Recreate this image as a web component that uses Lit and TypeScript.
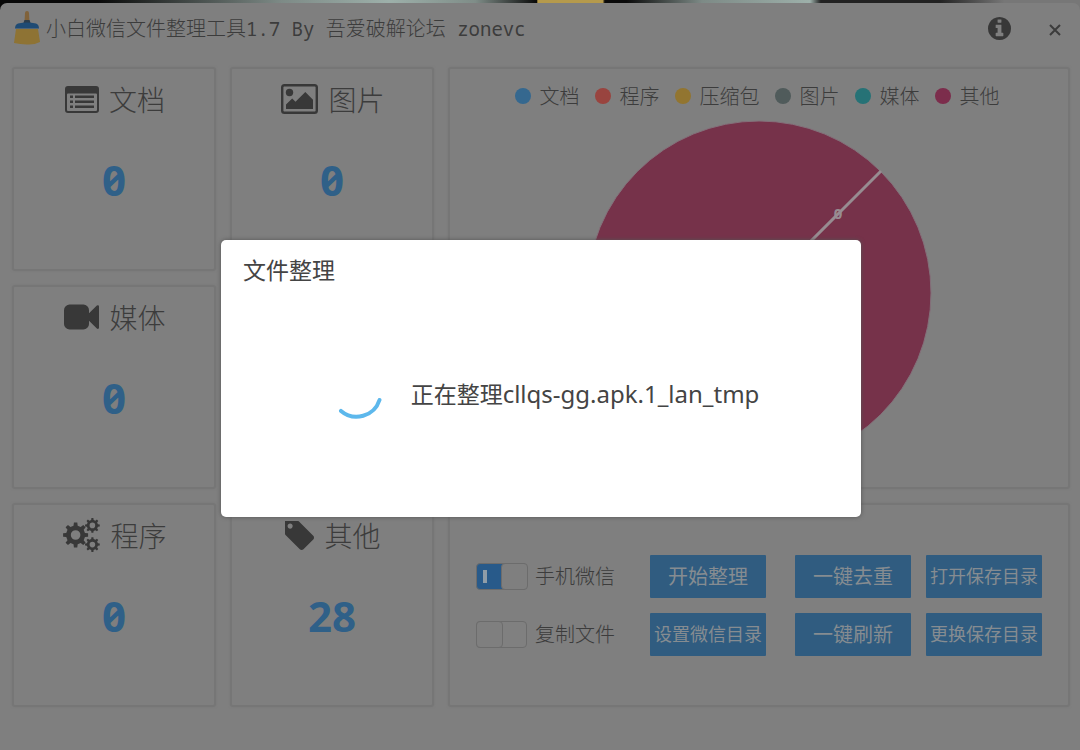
import { LitElement, html, css, svg } from "lit";
import { customElement, state } from "lit/decorators.js";

/** Outline of a cog wheel with a round hole, centred on (cx, cy). */
function cog(cx: number, cy: number, r: number, hole: number, teeth = 8): string {
  const inner = r * 0.76;
  const step = (Math.PI * 2) / teeth;
  const pts: string[] = [];
  for (let i = 0; i < teeth; i++) {
    const a = i * step;
    for (const [off, rad] of [[-0.28, inner], [-0.17, r], [0.17, r], [0.28, inner]]) {
      const t = a + off * step;
      pts.push(`${(cx + Math.cos(t) * rad).toFixed(2)} ${(cy + Math.sin(t) * rad).toFixed(2)}`);
    }
  }
  return `M${pts.join("L")}Z M${cx - hole} ${cy}a${hole} ${hole} 0 1 0 ${hole * 2} 0a${hole} ${hole} 0 1 0 ${-hole * 2} 0Z`;
}

const icons = {
  doc: html`<svg width="34" height="27" viewBox="0 0 34 27" aria-hidden="true">
    <path fill-rule="evenodd" d="M3 0H31a3 3 0 0 1 3 3V24a3 3 0 0 1-3 3H3a3 3 0 0 1-3-3V3a3 3 0 0 1 3-3ZM3 7.500a1 1 0 0 0-1 1V24a1 1 0 0 0 1 1H31a1 1 0 0 0 1-1V8.500a1 1 0 0 0-1-1Z"/>
    <path d="M5 9.500h3v2.400H5zM10 9.500h19v2.400H10zM5 14.500h3v2.400H5zM10 14.500h19v2.400H10zM5 19.500h3v2.400H5zM10 19.500h19v2.400H10z"/>
  </svg>`,
  image: html`<svg width="37" height="30" viewBox="0 0 37 30" aria-hidden="true">
    <path fill-rule="evenodd" d="M3.500 0H33.500a3.500 3.500 0 0 1 3.500 3.500V26.500a3.500 3.500 0 0 1-3.500 3.500H3.500a3.500 3.500 0 0 1-3.500-3.500V3.500A3.500 3.500 0 0 1 3.500 0ZM3.200 2.400a.8.8 0 0 0-.8.8V26.800a.8.8 0 0 0 .8.8H33.800a.8.8 0 0 0 .8-.8V3.200a.8.8 0 0 0-.8-.8Z"/>
    <circle cx="8.500" cy="8.500" r="3.700"/>
    <path d="M5 25V20.500L11.200 14.500L14.500 17.800L24.300 8L32 15.700V25Z"/>
  </svg>`,
  video: html`<svg width="35" height="26" viewBox="0 256 1792 1280" aria-hidden="true">
    <path d="M1792 352v1088q0 42-39 59-13 5-25 5-27 0-45-19l-403-403v166q0 119-84.500 203.500t-203.500 84.500h-704q-119 0-203.500-84.500t-84.500-203.500v-704q0-119 84.500-203.500t203.500-84.500h704q119 0 203.500 84.500t84.500 203.500v165l403-402q18-19 45-19 12 0 25 5 39 17 39 59z"/>
  </svg>`,
  cogs: html`<svg width="37" height="34" viewBox="0 0 37 34" aria-hidden="true">
    <path fill-rule="evenodd" d=${cog(12.6, 17, 12.6, 4.8)}/>
    <path fill-rule="evenodd" d=${cog(29.4, 7.4, 7.4, 2.8)}/>
    <path fill-rule="evenodd" d=${cog(29.4, 26.6, 7.4, 2.8)}/>
  </svg>`,
  tag: html`<svg width="29" height="29" viewBox="192 192 1451 1451" aria-hidden="true">
    <path d="M576 448q0-53-37.500-90.500t-90.500-37.500-90.500 37.500-37.500 90.500 37.500 90.500 90.500 37.500 90.500-37.500 37.500-90.500zm1067 576q0 53-37 90l-491 492q-39 37-91 37-53 0-90-37l-715-716q-38-37-64.500-101t-26.500-117v-416q0-52 38-90t90-38h416q53 0 117 26.500t102 64.500l715 714q37 39 37 91z"/>
  </svg>`,
};

@customElement("stat-card")
class StatCard extends LitElement {
  static properties = { label: {}, count: { type: Number }, icon: {} };
  declare label: string;
  declare count: number;
  declare icon: keyof typeof icons;

  static styles = css`
    :host {
      display: block;
      box-sizing: border-box;
      padding-top: 10px;
      border: 2px solid var(--line);
      border-radius: 3px;
      box-shadow: 0 0 2px var(--line);
      text-align: center;
    }
    .head {
      display: flex;
      align-items: center;
      justify-content: center;
      gap: 10px;
      height: 40px;
      margin: 0;
      padding-left: 2px;
      font-size: 28px;
      line-height: 40px;
      font-weight: 300;
      color: var(--text);
    }
    svg { fill: var(--icon); flex: none; }
    .count {
      margin: 31px 0 0;
      font: 700 42px/60px "Noto Sans", sans-serif;
      font-feature-settings: "zero" 1;
      color: var(--blue-text);
    }
  `;

  render() {
    return html`
      <h2 class="head">${icons[this.icon]}<span>${this.label}</span></h2>
      <p class="count">${this.count}</p>
    `;
  }
}

@customElement("pie-panel")
class PiePanel extends LitElement {
  static styles = css`
    :host {
      display: flex;
      flex-direction: column;
      align-items: center;
      box-sizing: border-box;
      padding-top: 12px;
      border: 2px solid var(--line);
      border-radius: 3px;
      box-shadow: 0 0 2px var(--line);
    }
    .legend {
      display: flex;
      gap: 15px;
      margin: 0;
      padding: 0 4px 0 0;
      list-style: none;
      font-size: 20px;
      line-height: 30px;
      font-weight: 300;
      color: var(--text);
    }
    .item { display: flex; align-items: center; gap: 9px; }
    .dot { width: 16px; height: 16px; border-radius: 50%; }
    .doc { background: #35688f; }
    .app { background: #99443f; }
    .zip { background: #927530; }
    .pic { background: #505b5b; }
    .media { background: #267276; }
    .other { background: #7c2d4c; }
    .pie { margin-top: 9px; flex: none; }
    .slice { fill: #76324a; stroke: #84707a; stroke-width: 1; }
    .ray { stroke: #978c91; stroke-width: 3; }
    .value { fill: #978c91; font: 700 15px "Noto Sans", sans-serif; text-anchor: middle; }
  `;

  private legend = [
    ["doc", "文档"], ["app", "程序"], ["zip", "压缩包"],
    ["pic", "图片"], ["media", "媒体"], ["other", "其他"],
  ];

  render() {
    return html`
      <ul class="legend">
        ${this.legend.map(([k, name]) => html`<li class="item"><span class="dot ${k}"></span>${name}</li>`)}
      </ul>
      <svg class="pie" width="346" height="346" viewBox="0 0 346 346" role="img" aria-label="文件类型">
        <circle class="slice" cx="173" cy="173" r="172"/>
        ${svg`<line class="ray" x1="173" y1="173" x2="295" y2="51"/>`}
        <text class="value" x="252" y="99">0</text>
      </svg>
    `;
  }
}

@customElement("app-root")
class AppRoot extends LitElement {
  @state() private phone = true;
  @state() private copy = false;

  static styles = css`
    :host {
      --line: #767676;
      --text: #3c3c3c;
      --icon: #383838;
      --blue: #305c80;
      --blue-text: #2f6088;
      display: block;
      position: relative;
      box-sizing: border-box;
      min-height: 100vh;
      padding-top: 3px;
      font-family: "Noto Sans CJK SC", sans-serif;
      background: linear-gradient(90deg, #080808 0 9%, #7d8a86 26%, #9db0aa 36%, #7f8d88 44%, #0a0a0a 49.700%,
        #b59a4c 49.800% 55.800%, #0a0a0a 56% 58%, #7d8a86 65%, #9db0aa 75%, #222 76% 87%, #777 93%);
    }
    .window {
      display: flex;
      flex-direction: column;
      box-sizing: border-box;
      min-height: calc(100vh - 3px);
      padding: 0 10px 0 12px;
      border-radius: 7px 7px 0 0;
      background: #7f7f7f;
    }
    .bar { display: flex; align-items: center; height: 50px; margin-bottom: 14px; }
    .logo { margin: 0 6px 0 2px; flex: none; }
    .title {
      flex: 1;
      margin: 0;
      font-size: 20px;
      line-height: 30px;
      font-weight: 300;
      color: var(--text);
      white-space: pre;
    }
    .latin { font-family: "Noto Sans Mono", "DejaVu Sans Mono", monospace; font-size: 19px; font-weight: 400; }
    .tool {
      display: flex;
      align-items: center;
      justify-content: center;
      width: 30px;
      height: 30px;
      padding: 0;
      border: 0;
      background: none;
      margin-left: 26px;
    }
    .close { padding-top: 4px; }
    .tool svg { fill: var(--icon); }
    .board {
      display: grid;
      grid-template-columns: 204px 204px minmax(0, 1fr);
      grid-auto-rows: 204px;
      gap: 14px;
    }
    .chart { grid-column: 3; grid-row: 1 / span 2; }
    .panel {
      grid-column: 3;
      display: flex;
      align-items: center;
      gap: 29px;
      box-sizing: border-box;
      padding: 0 26px;
      border: 2px solid var(--line);
      border-radius: 3px;
      box-shadow: 0 0 2px var(--line);
    }
    .col { display: grid; gap: 15px; }
    .switches { flex: 1; }
    .pair { grid-template-columns: 116px 116px; }
    .opt {
      display: flex;
      align-items: center;
      gap: 8px;
      height: 43px;
      font-size: 20px;
      line-height: 30px;
      font-weight: 300;
      color: var(--text);
      white-space: nowrap;
    }
    .switch {
      appearance: none;
      position: relative;
      width: 51px;
      height: 27px;
      margin: 0;
      box-sizing: border-box;
      border: 1px solid #6c6c6c;
      border-radius: 4px;
      background: #808080;
      flex: none;
    }
    .switch::before {
      content: "";
      position: absolute;
      top: -1px;
      left: -1px;
      box-sizing: border-box;
      width: 27px;
      height: 27px;
      border: 1px solid #6c6c6c;
      border-radius: 4px;
      background: #7f7f7f;
    }
    .switch:checked { background: #285a8a; }
    .switch:checked::before { left: 24px; }
    .switch:checked::after {
      content: "";
      position: absolute;
      left: 6px;
      top: 6px;
      width: 4px;
      height: 13px;
      background: #8f9da8;
    }
    .btn {
      width: 116px;
      height: 43px;
      padding: 0 0 2px;
      border: 0;
      border-radius: 1px;
      background: var(--blue);
      color: #868c91;
      font: 400 20px "Noto Sans CJK SC", sans-serif;
      white-space: nowrap;
    }
    .small { font-size: 18px; }
    .veil {
      position: absolute;
      inset: 0;
      display: flex;
      align-items: center;
      justify-content: center;
      padding: 7px 0 0 2px;
    }
    .modal {
      display: flex;
      flex-direction: column;
      box-sizing: border-box;
      width: 640px;
      max-width: 90%;
      height: 277px;
      padding: 13px 22px;
      border-radius: 5px;
      background: #fff;
      box-shadow: 0 0 4px #555;
      font: 400 23px/34px "Noto Sans", "Noto Sans CJK SC", sans-serif;
      color: #444;
    }
    .heading { margin: 0; font-size: 23px; font-weight: 400; }
    .status {
      display: flex;
      align-items: center;
      justify-content: center;
      gap: 28px;
      margin: 81px 0 0;
      padding-left: 8px;
      white-space: nowrap;
    }
    .file { font-size: 24px; }
    .spin { fill: none; stroke: #5db8ec; stroke-width: 4; stroke-linecap: round; flex: none; }
  `;

  private actions = ["一键去重", "打开保存目录", "一键刷新", "更换保存目录"];

  private button(text: string) {
    return html`<button type="button" class="btn ${text.length > 4 ? "small" : ""}">${text}</button>`;
  }

  render() {
    return html`
      <main class="window">
        <header class="bar">
          <svg class="logo" width="26" height="34" viewBox="0 0 26 34" aria-hidden="true">
            <path fill="#80623a" d="M11 2a2 2 0 0 1 4 0l.500 9h-5z"/>
            <path fill="#2c3d4c" d="M10.500 9h5l1.500 4H9z"/>
            <path fill="#1f4b74" d="M4 12.500q9-2 18 0q3 1 3 5H1q0-4 3-5z"/>
            <path fill="#8e7334" d="M2 18h22l2 13q-6 3-13 2.500T0 32z"/>
          </svg>
          <h1 class="title">小白微信文件整理工具<span class="latin">1.7 By </span>吾爱破解论坛<span class="latin"> zonevc</span></h1>
          <button type="button" class="tool" aria-label="关于">
            <svg width="23" height="23" viewBox="128 128 1536 1536"><path d="M1152 1376v-160q0-14-9-23t-23-9h-96v-512q0-14-9-23t-23-9h-320q-14 0-23 9t-9 23v160q0 14 9 23t23 9h96v320h-96q-14 0-23 9t-9 23v160q0 14 9 23t23 9h448q14 0 23-9t9-23zm-128-896v-160q0-14-9-23t-23-9h-192q-14 0-23 9t-9 23v160q0 14 9 23t23 9h192q14 0 23-9t9-23zm640 416q0 209-103 385.500t-279.500 279.500-385.500 103-385.500-103-279.500-279.500-103-385.500 103-385.500 279.500-279.500 385.500-103 385.500 103 279.500 279.500 103 385.500z"/></svg>
          </button>
          <button type="button" class="tool close" aria-label="关闭">
            <svg width="12" height="12" viewBox="0 0 12 12"><path d="M1 1L11 11M11 1L1 11" stroke="#3c3c3c" stroke-width="2"/></svg>
          </button>
        </header>
        <section class="board">
          <stat-card label="文档" count="0" icon="doc"></stat-card>
          <stat-card label="图片" count="0" icon="image"></stat-card>
          <pie-panel class="chart"></pie-panel>
          <stat-card label="媒体" count="0" icon="video"></stat-card>
          <div></div>
          <stat-card label="程序" count="0" icon="cogs"></stat-card>
          <stat-card label="其他" count="28" icon="tag"></stat-card>
          <div class="panel">
            <div class="col switches">
              <label class="opt"><input class="switch" type="checkbox" .checked=${this.phone}
                @change=${() => (this.phone = !this.phone)}>手机微信</label>
              <label class="opt"><input class="switch" type="checkbox" .checked=${this.copy}
                @change=${() => (this.copy = !this.copy)}>复制文件</label>
            </div>
            <div class="col">${this.button("开始整理")}${this.button("设置微信目录")}</div>
            <div class="col pair">${this.actions.map((a) => this.button(a))}</div>
          </div>
        </section>
      </main>
      <div class="veil">
        <section class="modal" role="dialog" aria-labelledby="heading">
          <h2 class="heading" id="heading">文件整理</h2>
          <p class="status">
            <svg class="spin" width="52" height="52" viewBox="0 0 52 52" aria-hidden="true">
              <path d="M10 42.900A24 24 0 0 0 48.500 32"/>
            </svg>
            <span>正在整理<span class="file">cllqs-gg.apk.1_lan_tmp</span></span>
          </p>
        </section>
      </div>
    `;
  }
}
